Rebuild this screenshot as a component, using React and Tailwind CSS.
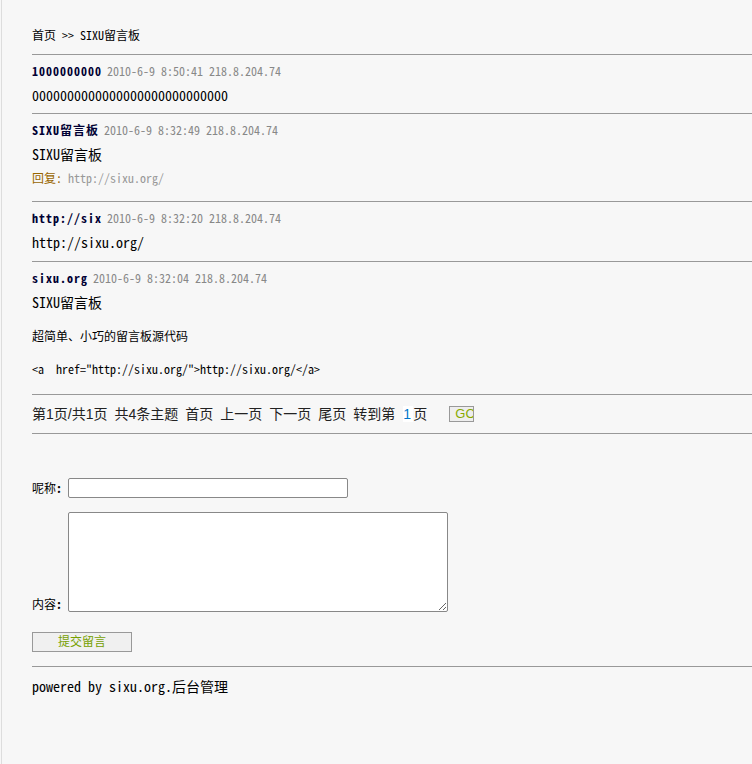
import React from 'react';

const mono = 'font-["Noto_Sans_Mono_CJK_SC","Liberation_Mono","Noto_Sans_CJK_SC",monospace]';
const sans = 'font-["Liberation_Sans","Noto_Sans_CJK_SC",sans-serif]';

const messages = [
  {
    name: '1000000000',
    time: '2010-6-9 8:50:41 218.8.204.74',
    body: <div className="h-[24px] leading-[24px] text-[14px]">0000000000000000000000000000</div>,
    pad: 'pb-[6px]',
  },
  {
    name: 'SIXU留言板',
    time: '2010-6-9 8:32:49 218.8.204.74',
    body: (
      <>
        <div className="h-[24px] leading-[24px] text-[14px]">SIXU留言板</div>
        <div className="h-[24px] leading-[24px] text-[12px]">
          <span className="text-[#996600]">回复:</span>{' '}
          <span className="text-[#999]">http://sixu.org/</span>
        </div>
      </>
    ),
    pad: 'pb-[11px]',
  },
  {
    name: 'http://six',
    time: '2010-6-9 8:32:20 218.8.204.74',
    body: <div className="h-[24px] leading-[24px] text-[14px]">http://sixu.org/</div>,
    pad: 'pb-[7px]',
  },
  {
    name: 'sixu.org',
    time: '2010-6-9 8:32:04 218.8.204.74',
    body: (
      <>
        <div className="h-[24px] leading-[24px] text-[14px]">SIXU留言板</div>
        <div className="mt-[10px] h-[24px] leading-[24px] text-[12px]">超简单、小巧的留言板源代码</div>
        <div className="mt-[9px] h-[24px] leading-[24px] text-[12px] whitespace-pre">
          {'<a  href="http://sixu.org/">http://sixu.org/</a>'}
        </div>
      </>
    ),
    pad: 'pb-[13px]',
  },
];

const pages = ['第1页/共1页', '共4条主题', '首页', '上一页', '下一页', '尾页'];

function Message({ m }) {
  return (
    <div className={`border-t border-[#999] pt-[4px] ${m.pad}`}>
      <div className="h-[24px] leading-[24px] text-[12px] whitespace-pre">
        <b className="text-[#000033] tracking-[1px]">{m.name}</b>
        <span className="ml-[5px] text-[#888]">{m.time}</span>
      </div>
      {m.body}
    </div>
  );
}

export default function App() {
  return (
    <div className={`min-h-[764px] bg-[#f7f7f7] ${mono} text-black`}>
      <div className="ml-px min-h-[764px] border-l border-[#ddd] pl-[30px] overflow-hidden">
        <div className="pt-[26px] pb-[10px] h-[54px] leading-[18px] text-[12px] whitespace-pre">
          首页 {'>>'} SIXU留言板
        </div>

        {messages.map((m, i) => (
          <Message key={i} m={m} />
        ))}

        {/* pagination */}
        <div className={`border-t border-b border-[#999] pt-[7px] pb-[7px] ${sans} text-[14px] text-[#222]`}>
          <div className="h-[24px] flex items-center whitespace-pre">
            {pages.map((p) => (
              <span key={p} className="mr-[7px]">{p}</span>
            ))}
            <span>转到第</span>
            <input
              defaultValue="1"
              className="ml-[8px] w-[10px] h-[16px] bg-white text-[#0077cc] text-[14px] outline-none p-0 border-0"
            />
            <span>页</span>
            <button className="ml-[22px] w-[25px] h-[16px] overflow-hidden border border-[#999] bg-[#eee] text-[#88aa00] text-[13px] leading-[14px] text-left pl-[5px]">
              GO
            </button>
          </div>
        </div>

        {/* form */}
        <div className="pt-[44px] text-[12px]">
          <div className="flex items-center gap-[6px]">
            <span className="w-[30px] whitespace-pre">呢称<b>:</b></span>
            <input className="w-[280px] h-[20px] bg-white border border-[#888] rounded-[2px] outline-none" />
          </div>
          <div className="mt-[14px] flex items-end gap-[6px]">
            <span className="w-[30px] leading-[16px] whitespace-pre">内容<b>:</b></span>
            <textarea className="w-[380px] h-[100px] bg-white border border-[#888] rounded-[2px] outline-none resize" />
          </div>
          <button className={`mt-[20px] w-[100px] h-[20px] border border-[#999] bg-[#f0f0f0] ${sans} text-[12px] text-[#77a000]`}>
            提交留言
          </button>
        </div>

        <div className="mt-[14px] border-t border-[#999] pt-[9px] h-[30px] leading-[20px] text-[14px] whitespace-pre">
          powered by sixu.org.后台管理
        </div>
      </div>
    </div>
  );
}
